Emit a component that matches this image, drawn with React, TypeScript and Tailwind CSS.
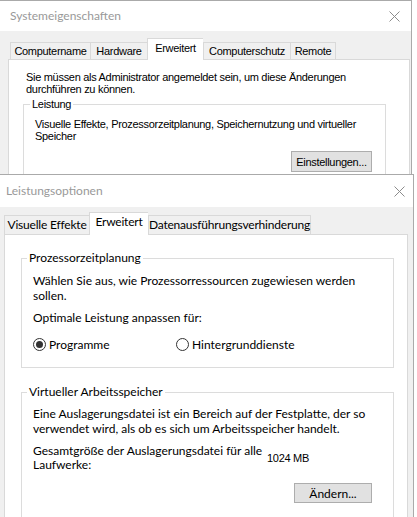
const seg = "font-['Lato',sans-serif] text-[12px]";
const ms = "font-['Liberation_Sans',Arial,sans-serif] text-[11px] tracking-[-0.3px]";

function CloseX() {
  return (
    <svg width="11" height="11" viewBox="0 0 11 11">
      <path d="M0.5 0.5L10.5 10.5M10.5 0.5L0.5 10.5" stroke="#8c8c8c" strokeWidth="1" fill="none" />
    </svg>
  );
}

function Radio({ checked, label, className }: { checked?: boolean; label: string; className?: string }) {
  return (
    <div className={"flex items-center gap-[3px] " + (className ?? "")}>
      <span className="w-[13px] h-[13px] rounded-full border border-[#333] bg-white flex items-center justify-center">
        {checked && <span className="w-[7px] h-[7px] rounded-full bg-[#333]" />}
      </span>
      <span>{label}</span>
    </div>
  );
}

export default function App() {
  return (
    <div className="w-[417px] h-[517px] overflow-hidden bg-white text-black">
      {/* Systemeigenschaften (hinten, abgeschnitten) */}
      <div className="w-[412px] h-[174px] overflow-hidden border-t border-r border-[#aaaaaa] bg-[#f0f0f0] flex flex-col">
        <div className="h-[30px] shrink-0 bg-white flex items-center justify-between pl-[10px] pr-[11px]">
          <span className={seg + " text-[#999999]"}>Systemeigenschaften</span>
          <CloseX />
        </div>
        <div className={"h-[28px] shrink-0 flex items-end pl-[10px] whitespace-nowrap " + ms}>
          <div className="w-[80px] h-[17px] border-t border-l border-[#d9d9d9] flex items-center justify-center">Computername</div>
          <div className="w-[57px] h-[17px] border-t border-l border-[#d9d9d9] flex items-center justify-center">Hardware</div>
          <div className="relative z-10 -mb-px w-[56px] h-[22px] border-t border-l border-[#d9d9d9] bg-white flex items-center justify-center pb-[3px]">Erweitert</div>
          <div className="w-[87px] h-[17px] border-t border-l border-[#d9d9d9] flex items-center justify-center">Computerschutz</div>
          <div className="w-[46px] h-[17px] border-t border-l border-r border-[#d9d9d9] flex items-center justify-center">Remote</div>
        </div>
        <div className={"ml-[8px] w-[402px] flex-1 border border-[#d9d9d9] bg-white pt-[11px] leading-[12px] " + ms}>
          <p className="ml-[17px]">
            Sie müssen als Administrator angemeldet sein, um diese Änderungen
            <br />
            durchführen zu können.
          </p>
          <fieldset className="mt-[3px] ml-[14px] w-[363px] h-[120px] border border-[#dcdcdc]">
            <legend className="ml-[6px] px-[2px] leading-[12px]">Leistung</legend>
            <p className="mt-[8px] ml-[11px]">
              Visuelle Effekte, Prozessorzeitplanung, Speichernutzung und virtueller
              <br />
              Speicher
            </p>
            <div className="mt-[9px] flex justify-end pr-[13px]">
              <button className="w-[81px] h-[21px] border border-[#adadad] bg-[#e1e1e1] flex items-center justify-center whitespace-nowrap">
                Einstellungen...
              </button>
            </div>
          </fieldset>
        </div>
      </div>

      {/* Leistungsoptionen */}
      <div className="w-[414px] h-[343px] border-t border-r border-[#aaaaaa] bg-[#f0f0f0] flex flex-col">
        <div className="h-[32px] shrink-0 bg-white flex items-center justify-between pl-[6px] pr-[8px]">
          <span className={seg + " text-[#999999]"}>Leistungsoptionen</span>
          <CloseX />
        </div>
        <div className={"h-[27px] shrink-0 flex items-end pl-[4px] whitespace-nowrap tracking-[-0.2px] " + seg}>
          <div className="w-[85px] h-[19px] border-t border-l border-[#d9d9d9] flex items-center justify-center">Visuelle Effekte</div>
          <div className="relative z-10 -mb-px w-[59px] h-[23px] border-t border-l border-[#d9d9d9] bg-white flex items-center justify-center pb-[4px]">Erweitert</div>
          <div className="w-[163px] h-[19px] border-t border-l border-r border-[#d9d9d9] flex items-center justify-center">Datenausführungsverhinderung</div>
        </div>
        <div className={"ml-[4px] w-[404px] flex-1 border border-[#d9d9d9] bg-white leading-[15px] " + seg}>
          <fieldset className="mt-[15px] ml-[16px] w-[373px] border border-[#dcdcdc] pb-[15px]">
            <legend className="ml-[5px] px-[2px] leading-[16px]">Prozessorzeitplanung</legend>
            <div className="pl-[11px]">
              <p className="mt-[7px]">
                Wählen Sie aus, wie Prozessorressourcen zugewiesen werden
                <br />
                sollen.
              </p>
              <p className="mt-[7px]">Optimale Leistung anpassen für:</p>
              <div className="mt-[12px] h-[15px] flex items-center">
                <Radio checked label="Programme" className="w-[143px]" />
                <Radio label="Hintergrunddienste" />
              </div>
            </div>
          </fieldset>

          <fieldset className="mt-[16px] ml-[16px] w-[373px] h-[160px] border border-[#dcdcdc]">
            <legend className="ml-[5px] px-[2px] leading-[16px]">Virtueller Arbeitsspeicher</legend>
            <div className="pl-[11px]">
              <p className="mt-[6px]">
                Eine Auslagerungsdatei ist ein Bereich auf der Festplatte, der so
                <br />
                verwendet wird, als ob es sich um Arbeitsspeicher handelt.
              </p>
              <div className="mt-[8px] flex items-center">
                <p className="w-[234px] leading-[14px]">
                  Gesamtgröße der Auslagerungsdatei für alle
                  <br />
                  Laufwerke:
                </p>
                <span className={ms}>1024 MB</span>
              </div>
              <div className="mt-[11px] flex justify-end pr-[21px]">
                <button className="w-[78px] h-[20px] border border-[#adadad] bg-[#e1e1e1] flex items-center justify-center">
                  Ändern...
                </button>
              </div>
            </div>
          </fieldset>
        </div>
      </div>
    </div>
  );
}
